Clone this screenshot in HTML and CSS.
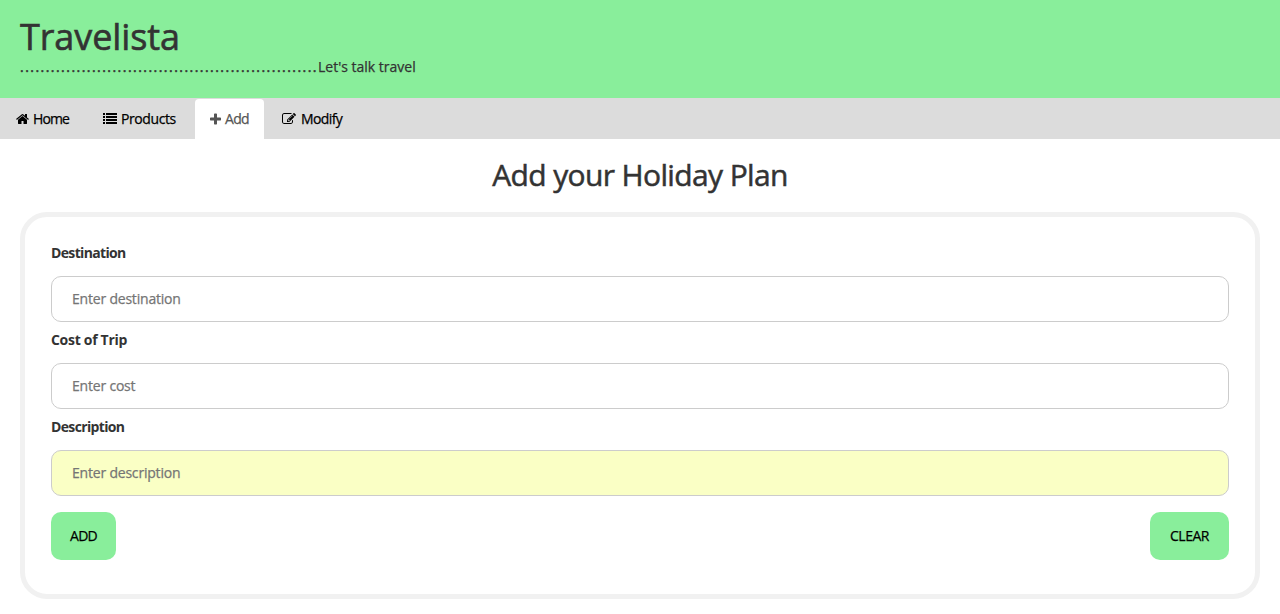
FILE: index.html
```html
<!DOCTYPE html>
<html lang="en">
<head>
<meta charset="utf-8">
<title>Travelista</title>
<link rel="stylesheet" href="styles.css">
</head>
<body>
<header class="masthead">
  <h1 class="brand"><span>Travelista</span></h1>
  <p class="tagline"><span class="dots">..........................................................</span><span class="motto">Let's talk travel</span></p>
</header>
<nav class="tabs">
  <a class="tab home"><svg class="icon" viewBox="0 0 1664 1792" width="13" height="14"><path d="M1408 992v480q0 26-19 45t-45 19h-384v-384h-256v384h-384q-26 0-45-19t-19-45v-480q0-1 .5-3t.5-3l575-474 575 474q1 2 1 6zm223-69l-62 74q-8 9-21 11h-3q-13 0-21-7l-692-577-692 577q-12 8-24 7-13-2-21-11l-62-74q-8-10-7-23.500t11-21.500l719-599q32-26 76-26t76 26l244 204v-195q0-14 9-23t23-9h192q14 0 23 9t9 23v408l219 182q10 8 11 21.500t-7 23.500z"/></svg><span>Home</span></a>
  <a class="tab products"><svg class="icon" viewBox="0 0 1792 1792" width="14" height="14"><path d="M0 128h256v256H0zM384 128h1408v256H384zM0 512h256v256H0zM384 512h1408v256H384zM0 896h256v256H0zM384 896h1408v256H384zM0 1280h256v256H0zM384 1280h1408v256H384z"/></svg><span>Products</span></a>
  <a class="tab add active"><svg class="icon" viewBox="0 0 1408 1792" width="11" height="14"><path d="M1408 800v192q0 40-28 68t-68 28h-416v416q0 40-28 68t-68 28h-192q-40 0-68-28t-28-68v-416h-416q-40 0-68-28t-28-68v-192q0-40 28-68t68-28h416v-416q0-40 28-68t68-28h192q40 0 68 28t28 68v416h416q40 0 68 28t28 68z"/></svg><span>Add</span></a>
  <a class="tab modify"><svg class="icon" viewBox="0 0 1792 1792" width="14" height="14"><path d="M888 1184l116-116-152-152-116 116v56h96v96h56zm440-720q-16-16-33 1l-350 350q-17 17-1 33t33-1l350-350q17-17 1-33zm80 594v190q0 119-84.500 203.500t-203.500 84.500h-832q-119 0-203.500-84.500t-84.500-203.500v-832q0-119 84.500-203.500t203.500-84.500h832q63 0 117 25 15 7 18 23 3 17-9 29l-49 49q-14 14-32 8-23-6-45-6h-832q-66 0-113 47t-47 113v832q0 66 47 113t113 47h832q66 0 113-47t47-113v-126q0-13 9-22l64-64q15-15 35-7t20 29zm-96-738l288 288-672 672h-288v-288zm444 132l-92 92-288-288 92-92q28-28 68-28t68 28l152 152q28 28 28 68t-28 68z"/></svg><span>Modify</span></a>
</nav>
<main class="page">
  <h2 class="title">Add your Holiday Plan</h2>
  <form class="card">
    <label class="label" for="destination">Destination</label>
    <input class="field" id="destination" type="text" placeholder="Enter destination">
    <label class="label trip" for="cost">Cost of Trip</label>
    <input class="field cost" id="cost" type="text" placeholder="Enter cost">
    <label class="label" for="description">Description</label>
    <input class="field filled" id="description" type="text" placeholder="Enter description">
    <div class="actions">
      <button class="button" type="button">ADD</button>
      <button class="button clear" type="button">CLEAR</button>
    </div>
  </form>
</main>
</body>
</html>
```
FILE: styles.css
```css
* { box-sizing: border-box; }
body {
  margin: 0;
  min-height: 614px;
  background: #fff;
  color: #333;
  font: 14px/20px "Trebuchet MS", "Open Sans", sans-serif;
  letter-spacing: -0.4px;
  -webkit-text-stroke: 0.25px currentColor;
}
.masthead {
  height: 98px;
  padding: 17px 20px 0;
  background: #89ee9b;
}
.brand {
  margin: 0;
  font-size: 36px;
  line-height: 40px;
  font-weight: 500;
  letter-spacing: -0.1px;
  -webkit-text-stroke-width: 0.6px;
}
.tagline { display: flex; margin: 0; }
.dots { width: 298px; letter-spacing: 1.46px; -webkit-text-stroke-width: 0.5px; }
.motto { letter-spacing: 0; }
.tabs {
  display: flex;
  height: 41px;
  padding-top: 1px;
  background: #dcdcdc;
  color: #000;
}
.tab {
  display: flex;
  align-items: center;
  gap: 4px;
  height: 40px;
  border-radius: 4px 4px 0 0;
}
.icon { flex: none; fill: currentColor; }
.home { width: 87px; padding-left: 16px; letter-spacing: -0.9px; }
.products { width: 108px; padding-left: 16px; }
.add { width: 69px; padding-left: 15px; letter-spacing: -0.7px; }
.modify { padding-left: 18px; gap: 5px; letter-spacing: -0.6px; }
.active { background: #fff; color: #555; }
.page { padding: 20px 20px 0; }
.title {
  margin: -1px 0 21px;
  font-size: 30px;
  line-height: 33px;
  font-weight: 500;
  text-align: center;
  letter-spacing: -0.63px;
  -webkit-text-stroke-width: 0.5px;
}
.card {
  display: flex;
  flex-direction: column;
  height: 387px;
  padding: 26px;
  border: 5px solid #f1f1f1;
  border-radius: 27px;
}
.label {
  height: 33px;
  font-weight: 700;
  letter-spacing: -0.65px;
  -webkit-text-stroke-width: 0;
}
.trip { letter-spacing: -0.3px; }
.field {
  width: 100%;
  height: 46px;
  margin: 0 0 8px;
  padding: 11px 20px 13px;
  border: 1px solid #ccc;
  border-radius: 10px;
  background: #fff;
  font: inherit;
  letter-spacing: -0.2px;
}
.field::placeholder { color: #757575; opacity: 1; }
.filled { background: #faffc5; }
.actions {
  display: flex;
  justify-content: space-between;
  margin-top: 8px;
}
.button {
  width: 65px;
  height: 48px;
  padding: 0;
  border: 0;
  border-radius: 10px;
  background: #89ee9b;
  color: #000;
  font: inherit;
  letter-spacing: -0.8px;
}
.clear { width: 79px; letter-spacing: -0.5px; }
```
